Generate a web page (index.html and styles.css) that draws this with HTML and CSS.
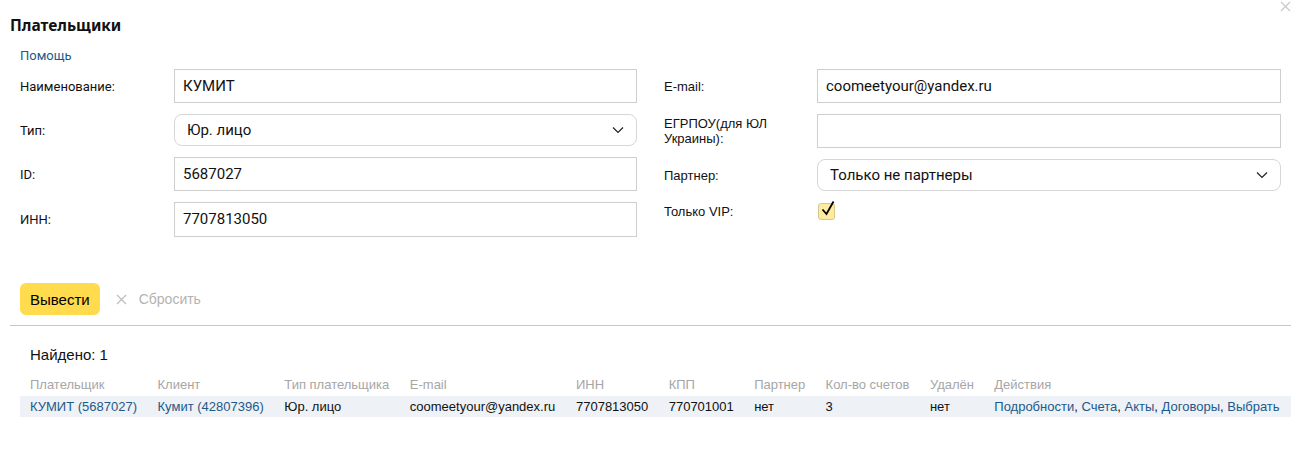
FILE: index.html
```html
<!DOCTYPE html>
<html lang="ru">
<head>
<meta charset="utf-8">
<link rel="stylesheet" href="styles.css">
</head>
<body>
<div class="page">
  <svg class="close" width="11" height="11" viewBox="0 0 11 11"><path d="M1 1L10 10M10 1L1 10" stroke="#c8c8c8" stroke-width="1.2"/></svg>
  <h1 class="title">Плательщики</h1>
  <a class="help" href="#">Помощь</a>
  <div class="form">
    <div class="col">
      <div class="row"><label class="lbl">Наименование:</label><div class="input">КУМИТ</div></div>
      <div class="row row-sel"><label class="lbl">Тип:</label><div class="select">Юр. лицо<svg class="chev" width="12" height="8" viewBox="0 0 12 8"><path d="M1 1.5L6 6.5L11 1.5" fill="none" stroke="#222" stroke-width="1.2"/></svg></div></div>
      <div class="row"><label class="lbl">ID:</label><div class="input">5687027</div></div>
      <div class="row row-last"><label class="lbl">ИНН:</label><div class="input">7707813050</div></div>
    </div>
    <div class="col col-r">
      <div class="row"><label class="lbl lbl-r">E-mail:</label><div class="input">coomeetyour@yandex.ru</div></div>
      <div class="row"><label class="lbl lbl-r">ЕГРПОУ(для ЮЛ<br>Украины):</label><div class="input"></div></div>
      <div class="row row-sel"><label class="lbl lbl-r">Партнер:</label><div class="select">Только не партнеры<svg class="chev" width="12" height="8" viewBox="0 0 12 8"><path d="M1 1.5L6 6.5L11 1.5" fill="none" stroke="#222" stroke-width="1.2"/></svg></div></div>
      <div class="row row-chk"><label class="lbl lbl-r">Только VIP:</label><span class="chk"><svg width="18" height="20" viewBox="0 0 18 20"><path d="M3.5 10.5L7.5 15L14.5 2.5" fill="none" stroke="#000" stroke-width="1.8"/></svg></span></div>
    </div>
  </div>
  <div class="actions">
    <button class="btn">Вывести</button>
    <span class="reset"><svg width="11" height="11" viewBox="0 0 11 11"><path d="M1 1L10 10M10 1L1 10" stroke="#bdbdbd" stroke-width="1.2"/></svg>Сбросить</span>
  </div>
  <hr class="sep">
  <div class="results">
    <div class="found">Найдено: 1</div>
    <table class="tbl">
      <thead>
        <tr><th>Плательщик</th><th>Клиент</th><th>Тип плательщика</th><th>E-mail</th><th>ИНН</th><th>КПП</th><th>Партнер</th><th>Кол-во счетов</th><th>Удалён</th><th>Действия</th></tr>
      </thead>
      <tbody>
        <tr><td><a href="#">КУМИТ (5687027)</a></td><td><a href="#">Кумит (42807396)</a></td><td>Юр. лицо</td><td>coomeetyour@yandex.ru</td><td>7707813050</td><td>770701001</td><td>нет</td><td>3</td><td>нет</td><td><a href="#">Подробности</a>, <a href="#">Счета</a>, <a href="#">Акты</a>, <a href="#">Договоры</a>, <a href="#">Выбрать</a></td></tr>
      </tbody>
    </table>
  </div>
</div>
</body>
</html>
```
FILE: styles.css
```css
* { box-sizing: border-box; }
body { margin: 0; background: #fff; color: #000; font-family: Roboto, "Noto Sans", sans-serif; }
.page { position: relative; padding: 0 10px; }
.close { position: absolute; right: 10px; top: 1px; }
.title { margin: 0; padding-top: 14px; font-family: "Noto Sans", sans-serif; font-size: 15.5px; font-weight: 700; line-height: 22px; color: #111; }
.help { display: block; margin: 11px 0 0 10px; font-size: 13px; line-height: 18px; color: #1c5a8a; text-decoration: none; }
.form { display: flex; gap: 27px; padding-left: 10px; margin-top: 4px; }
.col { display: flex; flex-direction: column; gap: 11px; width: 617px; }
.col-r { width: 617px; }
.row { display: flex; align-items: center; min-height: 34px; }
.row-sel { min-height: 32px; }
.row-last { min-height: 35px; }
.row-chk { min-height: 20px; margin-top: -1px; }
.lbl { width: 154px; flex: none; font-size: 13px; line-height: 15px; color: #111; }
.lbl-r { width: 153px; font-family: "Liberation Sans", Arial, sans-serif; }
.input { width: 464px; height: 34px; border: 1px solid #cfcfcf; padding: 0 8px; font-size: 15px; line-height: 32px; color: #111; }
.row-last .input { height: 35px; }
.select { width: 464px; height: 32px; border: 1px solid #d6d6d6; border-radius: 8px; padding: 0 12px; font-size: 15px; line-height: 30px; color: #111; display: flex; justify-content: space-between; align-items: center; }
.chev { flex: none; }
.chk { width: 17px; height: 17px; background: #ffeba0; border: 1px solid #d8c78a; border-radius: 3px; position: relative; margin-left: 1px; }
.chk svg { position: absolute; left: 0; top: -5px; }
.actions { display: flex; align-items: center; gap: 16px; padding-left: 10px; margin-top: 46px; }
.btn { height: 32px; padding: 0 10px; border: 0; border-radius: 6px; background: #ffdb4d; font-family: "Liberation Sans", Arial, sans-serif; font-size: 15px; color: #000; }
.reset { display: flex; align-items: center; gap: 12px; font-family: "Liberation Sans", Arial, sans-serif; font-size: 14px; color: #b3b3b3; }
.sep { margin: 10px 0 0; border: 0; border-top: 1px solid #c6c6c6; }
.results { padding-left: 10px; }
.found { margin-top: 19px; margin-left: 10px; font-family: "Liberation Sans", Arial, sans-serif; font-size: 15px; line-height: 19px; color: #111; }
.tbl { border-collapse: collapse; margin-top: 9px; width: 100%; font-family: "Liberation Sans", Arial, sans-serif; font-size: 13px; }
.tbl th { text-align: left; font-weight: 400; color: #a6a6a6; padding: 0 10px; height: 23px; line-height: 15px; white-space: nowrap; }
.tbl td { background: #eef1f5; padding: 0 10px; height: 21px; color: #111; white-space: nowrap; }
.tbl a { color: #1c5a8a; text-decoration: none; }
```
